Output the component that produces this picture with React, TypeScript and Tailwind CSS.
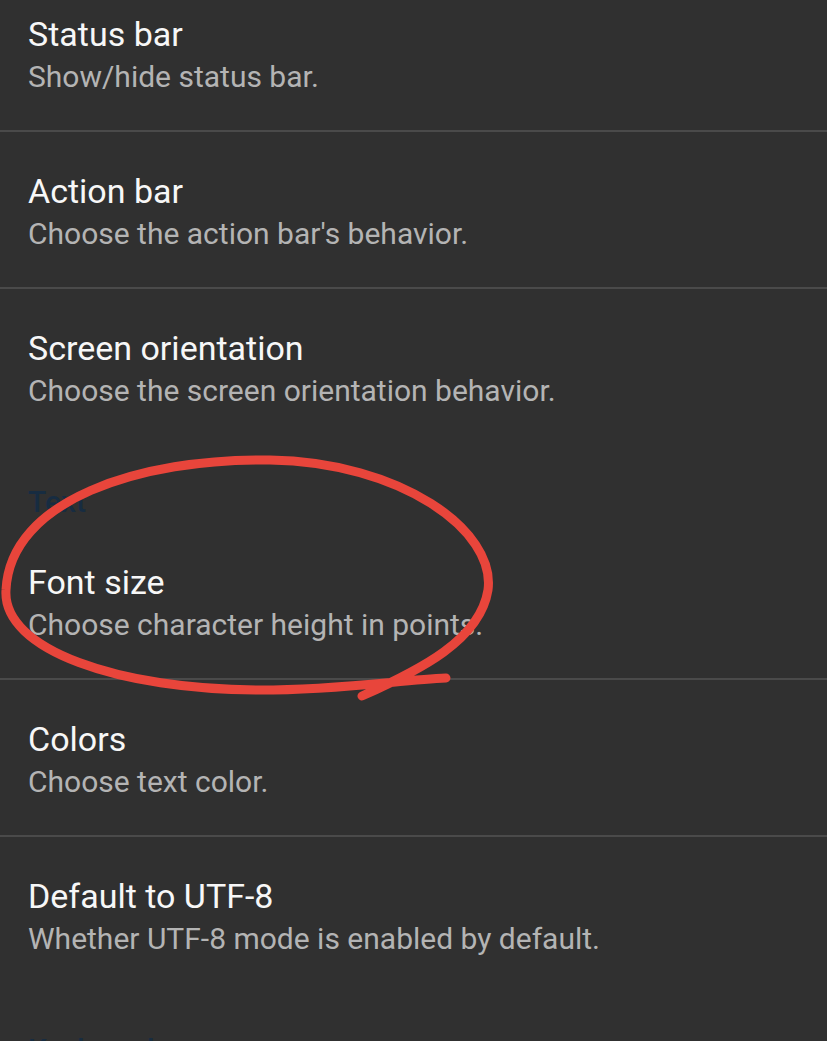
const groups = [
  {
    header: null,
    items: [
      { title: 'Status bar', summary: 'Show/hide status bar.' },
      { title: 'Action bar', summary: "Choose the action bar's behavior." },
      { title: 'Screen orientation', summary: 'Choose the screen orientation behavior.' },
    ],
  },
  {
    header: 'Text',
    items: [
      { title: 'Font size', summary: 'Choose character height in points.' },
      { title: 'Colors', summary: 'Choose text color.' },
      { title: 'Default to UTF-8', summary: 'Whether UTF-8 mode is enabled by default.' },
    ],
  },
  { header: 'Keyboard', items: [] },
]

function PrefRow({ title, summary, last }: { title: string; summary: string; last: boolean }) {
  return (
    <div className={last ? 'h-[157px] pl-[28px] pt-[39px]' : 'h-[157px] pl-[28px] pt-[39px] border-b-2 border-[#4a4a4a]'}>
      <div className="text-[34px] leading-[40px] text-[#f7f7f7]">{title}</div>
      <div className="mt-[3px] text-[30px] leading-[40px] text-[#b4b4b4]">{summary}</div>
    </div>
  )
}

export default function App() {
  return (
    <div className="relative h-[1041px] w-[827px] overflow-hidden bg-[#303030]" style={{ fontFamily: 'Roboto, "Noto Sans", sans-serif' }}>
      <div className="-mt-[25px] flex flex-col">
        {groups.map((g) => (
          <div key={g.header ?? 'top'} className="flex flex-col">
            {g.header && (
              <div className="h-[77px] pl-[28px] pt-[36px] text-[30px] font-medium leading-[40px] text-[#172c41]">
                {g.header}
              </div>
            )}
            {g.items.map((it, i) => (
              <PrefRow key={it.title} title={it.title} summary={it.summary} last={i === g.items.length - 1} />
            ))}
          </div>
        ))}
      </div>

      {/* hand-drawn annotation */}
      <svg className="pointer-events-none absolute left-0 top-0" width="827" height="1041" viewBox="0 0 827 1041">
        <path
          d="M 362 696 C 420 670, 480 640, 488 590 C 496 530, 400 462, 270 460 C 140 458, 10 500, 6 590 C 2 650, 120 690, 260 690 C 340 690, 400 680, 446 678"
          fill="none"
          stroke="#e8453b"
          strokeWidth="9"
          strokeLinecap="round"
          strokeLinejoin="round"
        />
      </svg>
    </div>
  )
}
